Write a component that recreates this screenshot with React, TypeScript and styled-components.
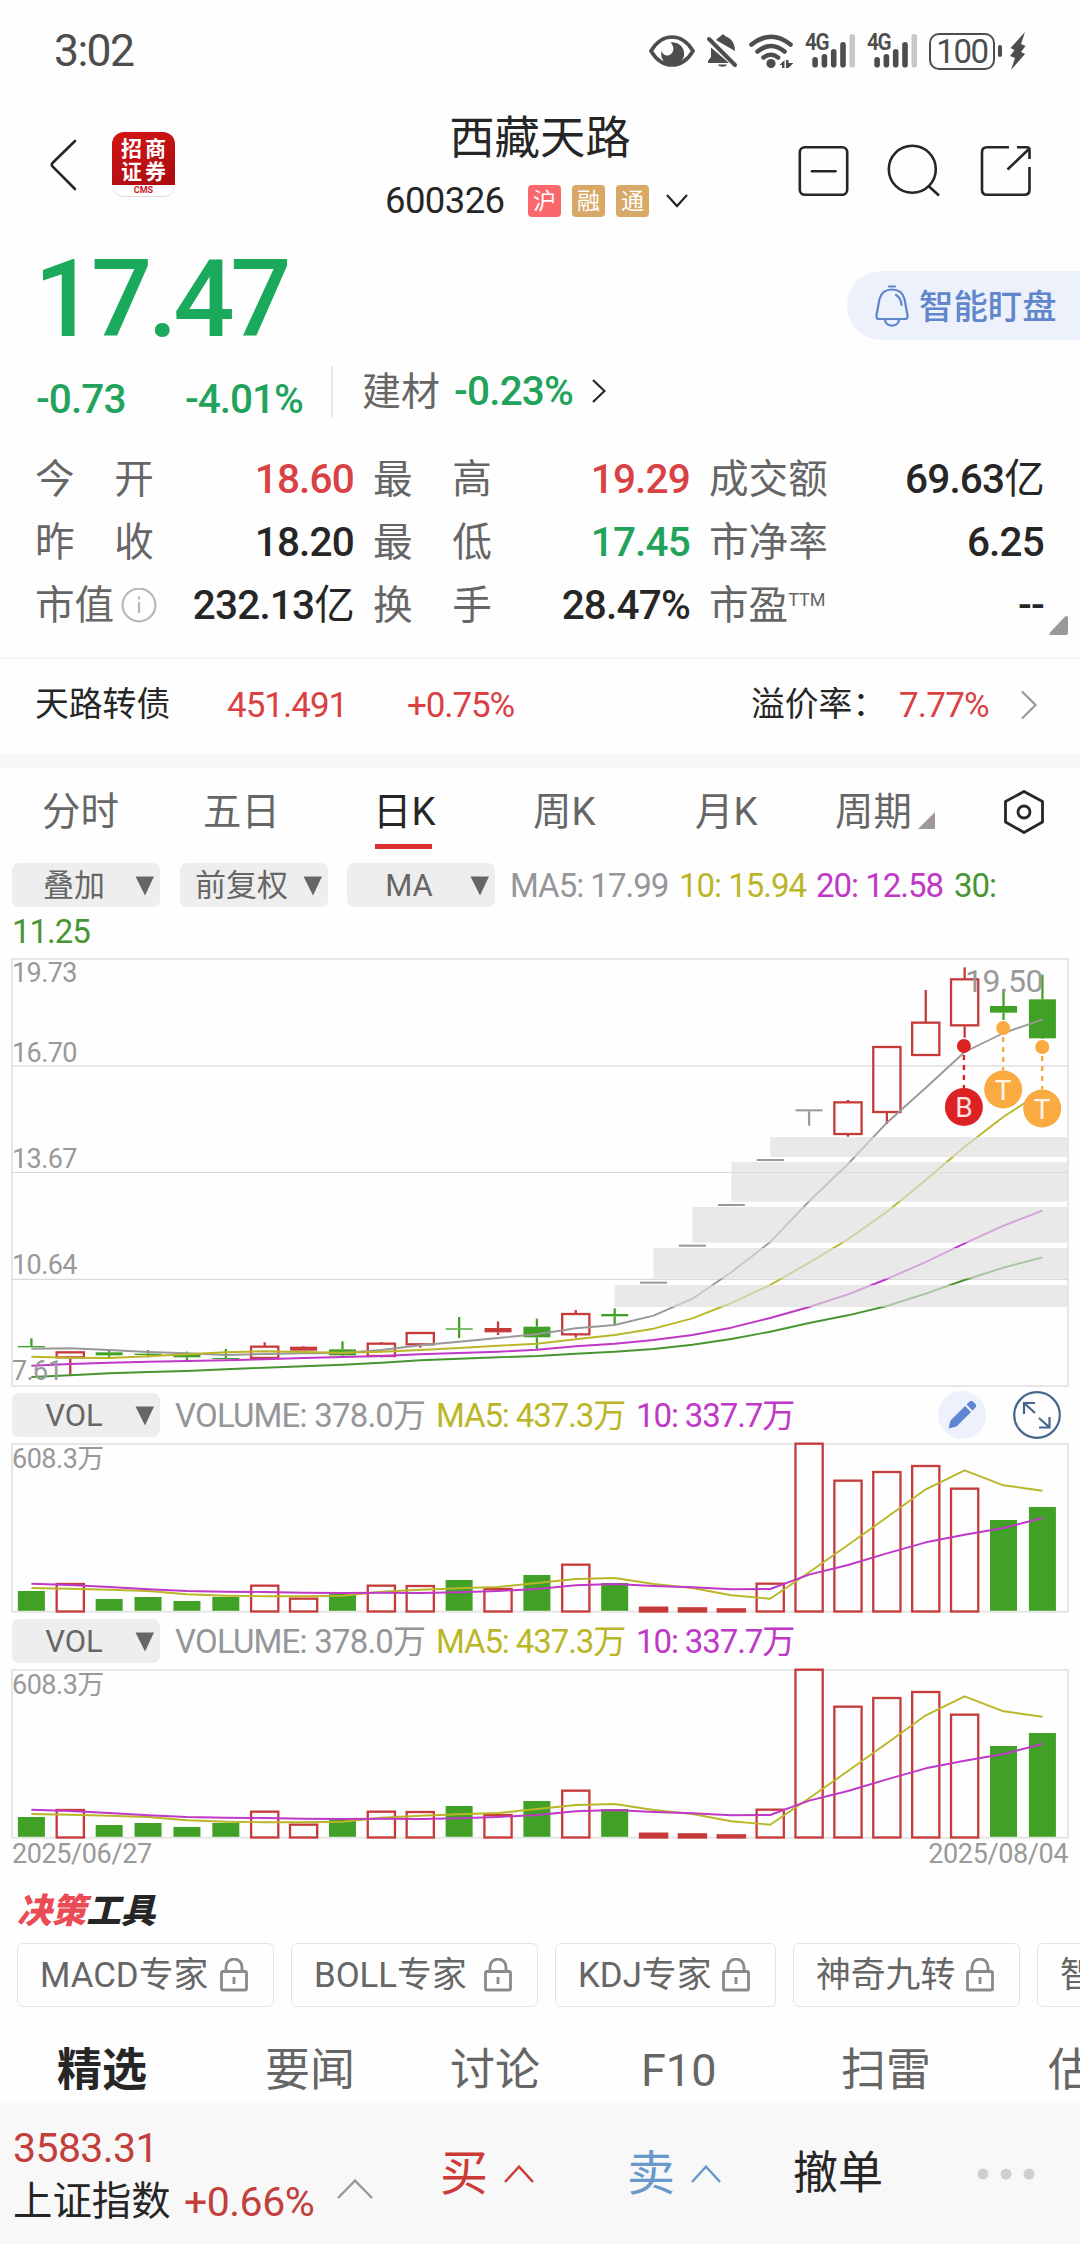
import React from 'react';
import styled, { createGlobalStyle } from 'styled-components';

const FONT = "Roboto, 'Noto Sans CJK SC', sans-serif";

const C = {
  ink: '#262626',
  label: '#666666',
  green: '#22a35c',
  red: '#d94145',
  mute: '#999999',
  candleRed: '#c63a3a',
  candleGreen: '#40a126',
  maGray: '#999999',
  maYellow: '#bab628',
  maMagenta: '#bf38c6',
  maGreen: '#479632',
};

const Global = createGlobalStyle`
  * { box-sizing: border-box; }
  body { margin: 0; background: #fefefe; font-family: ${FONT}; }
  svg { display: block; flex: none; }
`;

const Page = styled.main`
  display: flex;
  flex-direction: column;
  width: 1080px;
  height: 2244px;
  overflow: hidden;
  background: #fefefe;
  color: ${C.ink};
`;

const Text = styled.span<{ $size: number; $ls?: number; $color?: string; $weight?: number }>`
  font-size: ${(p) => p.$size}px;
  letter-spacing: ${(p) => p.$ls ?? 0}px;
  color: ${(p) => p.$color ?? 'inherit'};
  font-weight: ${(p) => p.$weight ?? 400};
  line-height: 1;
  white-space: pre;
`;

/* ---------- status bar ---------- */

const StatusBar = styled.header`
  display: flex;
  align-items: center;
  justify-content: space-between;
  height: 102px;
  padding: 0 55px 0 54px;
  color: #4d4d4d;
`;

const StatusIcons = styled.div`
  display: flex;
  align-items: center;
  gap: 12px;
`;

const BatteryGroup = styled.div`
  display: flex;
  align-items: center;
  gap: 3px;
  margin-right: -4px;
`;

const BatteryBody = styled.div`
  display: flex;
  align-items: center;
  justify-content: center;
  width: 66px;
  height: 37px;
  border: 2.5px solid #4d4d4d;
  border-radius: 10px;
`;

const BatteryTip = styled.div`
  width: 4px;
  height: 12px;
  border-radius: 2px;
  background: #4d4d4d;
`;

const SignalBox = styled.div`
  position: relative;
  width: 50px;
  height: 34px;
`;

const SignalLabel = styled.span`
  position: absolute;
  left: 0;
  top: -1px;
  font-size: 23px;
  line-height: 20px;
  font-weight: 600;
  letter-spacing: -1.5px;
  transform: scaleX(0.9);
  transform-origin: left;
`;

const Signal = () => (
  <SignalBox>
    <svg width="50" height="34" viewBox="803 34 50 34">
      {[57, 54, 49, 42, 34].map((top, i) => (
        <rect key={top} x={810.3 + i * 9.3} y={top} width="5.6" height={67.5 - top} rx="2.8" fill={i === 4 ? '#c8c8c8' : '#4d4d4d'} />
      ))}
    </svg>
    <SignalLabel>4G</SignalLabel>
  </SignalBox>
);

/* ---------- title bar ---------- */

const TitleBar = styled.nav`
  display: grid;
  grid-template-columns: 380px 320px 380px;
  height: 138px;
`;

const TitleLeft = styled.div`
  display: flex;
  align-items: center;
  gap: 35px;
  padding: 0 0 13px 49px;
`;

const TitleRight = styled.div`
  display: flex;
  align-items: center;
  gap: 38px;
  padding-left: 97px;
`;

const Logo = styled.div`
  display: flex;
  flex-direction: column;
  align-items: center;
  width: 63px;
  height: 65px;
  border-radius: 12px;
  overflow: hidden;
  border-bottom: 1px solid #ddd;
  background: #fff;
`;

const LogoTop = styled.div`
  width: 100%;
  height: 53px;
  padding: 4px 0 0 3px;
  background: linear-gradient(160deg, #d41515, #a80c10);
  color: #fff;
  font-family: 'Noto Sans CJK SC', sans-serif;
  font-size: 21px;
  letter-spacing: 3px;
  font-weight: 700;
  line-height: 23px;
  text-align: center;
`;

const LogoBottom = styled.div`
  color: #c8161d;
  font-size: 9px;
  font-weight: 700;
  line-height: 10px;
`;

const TitleCenter = styled.div`
  display: flex;
  flex-direction: column;
`;

const StockName = styled.h1`
  margin: 0;
  height: 70px;
  font-size: 45.4px;
  line-height: 74px;
  font-weight: 400;
  text-align: center;
`;

const CodeRow = styled.div`
  display: flex;
  align-items: center;
  height: 58px;
  gap: 11px;
  padding-left: 5px;
`;

const CodeText = styled.span`
  width: 132px;
  font-size: 36.5px;
  letter-spacing: -0.6px;
  line-height: 58px;
`;

const Tag = styled.span<{ $bg: string }>`
  width: 33px;
  height: 32px;
  border-radius: 4px;
  background: ${(p) => p.$bg};
  color: #fff;
  font-size: 23px;
  line-height: 33px;
  text-align: center;
`;

const ChevronSlot = styled.span`
  padding-left: 6px;
`;

/* ---------- quote ---------- */

const PriceRow = styled.div`
  display: flex;
  justify-content: space-between;
  height: 116px;
  padding-left: 34px;
`;

const Price = styled.div`
  color: #1ba95c;
  font-size: 108px;
  font-weight: 500;
  line-height: 119px;
  letter-spacing: -4.5px;
`;

const WatchPill = styled.div`
  display: flex;
  align-items: center;
  gap: 8px;
  width: 233px;
  height: 69px;
  margin-top: 31px;
  padding-left: 28px;
  border-radius: 35px 0 0 35px;
  background: #ecf1fb;
`;

const PillText = styled.span`
  padding-top: 3px;
  color: #6185cb;
  font-size: 34.4px;
  font-weight: 500;
  line-height: 1;
`;

const ChangeRow = styled.div`
  display: grid;
  grid-template-columns: 149px 146px 31px 92px 138px 1fr;
  align-items: center;
  height: 70px;
  padding-left: 36px;
`;

const Lowered = styled.div`
  padding-top: 16px;
  line-height: 1;
`;

const SectorName = styled.div`
  padding-top: 3px;
  color: ${C.label};
  font-size: 39px;
  line-height: 1;
`;

const ThinDivider = styled.div`
  width: 1.5px;
  height: 51px;
  background: #e6e6e6;
`;

const StatGrid = styled.div`
  position: relative;
  display: grid;
  grid-template-columns: 319px 317px 335px;
  column-gap: 19px;
  grid-auto-rows: 63px;
  height: 210px;
  margin-top: 21px;
  padding: 1px 36px 0 35px;
`;

const Stat = styled.div`
  display: flex;
  align-items: center;
  justify-content: space-between;
`;

const StatLabel = styled.span`
  display: flex;
  align-items: center;
  color: ${C.label};
  font-size: 39.6px;
  line-height: 63px;
  white-space: pre;
`;

const Unit = styled.span`
  font-weight: 400;
`;

const StatSup = styled.sup`
  font-size: 18px;
  line-height: 20px;
  padding-bottom: 11px;
`;

const ExpandCorner = styled.svg`
  position: absolute;
  right: 12px;
  top: 168px;
`;

const BondRow = styled.div`
  display: grid;
  grid-template-columns: 192px 180px 344px 148px 121px 1fr;
  align-items: center;
  height: 97px;
  padding: 0 0 3px 35px;
  border-top: 2px solid #f5f5f5;
`;

const Band = styled.div`
  height: 14px;
  background: #f7f7f7;
`;

/* ---------- period tabs ---------- */

const PeriodTabs = styled.div`
  display: grid;
  grid-template-columns: 161px 170px 160px 162px 140px 168px 1fr;
  align-items: center;
  height: 95px;
  padding: 0 0 7px 42px;
`;

const PeriodTab = styled.div<{ $active?: boolean }>`
  position: relative;
  display: flex;
  align-items: center;
  gap: 6px;
  height: 88px;
  font-size: 38.4px;
  line-height: 90px;
  color: ${(p) => (p.$active ? C.ink : C.label)};
  &::after {
    content: '';
    display: ${(p) => (p.$active ? 'block' : 'none')};
    position: absolute;
    left: 2px;
    bottom: 7.5px;
    width: 57px;
    height: 4.5px;
    background: #dc2f2f;
  }
`;

/* ---------- indicator bars ---------- */

const Legend = styled.div<{ $h: number }>`
  display: flex;
  align-items: center;
  height: ${(p) => p.$h}px;
  padding-left: 12px;
`;

const Dropdown = styled.button<{ $gap?: number }>`
  display: grid;
  grid-template-columns: 123px 25px;
  align-items: center;
  width: 148px;
  height: 44px;
  margin: 0 ${(p) => p.$gap ?? 19.5}px 0 0;
  padding: 0;
  border: 0;
  border-radius: 7px;
  background: #eeeeee;
  color: ${C.label};
  font-family: inherit;
  font-size: 31px;
  line-height: 44px;
  white-space: nowrap;
`;

const DropLabel = styled.span`
  padding: 2px 0 0 1px;
  line-height: 42px;
  text-align: center;
`;

const DropCaret = styled.span`
  padding-top: 2px;
`;

const LegendItem = styled.span<{ $color: string; $w: number; $ls?: number }>`
  width: ${(p) => p.$w}px;
  padding-top: 2px;
  color: ${(p) => p.$color};
  font-size: 33px;
  line-height: 44px;
  letter-spacing: ${(p) => p.$ls ?? -1}px;
  white-space: nowrap;
`;

const LegendWrap = styled.div`
  height: 48px;
  padding-left: 12px;
  color: ${C.maGreen};
  font-size: 33px;
  line-height: 49px;
  letter-spacing: -1px;
`;

const LegendTools = styled.div`
  display: flex;
  gap: 27px;
  margin-left: auto;
  padding-right: 19px;
`;

const DateRow = styled.div`
  display: flex;
  justify-content: space-between;
  height: 26px;
  padding: 0 12px;
  color: ${C.mute};
  font-size: 27px;
  line-height: 28px;
  letter-spacing: -0.4px;
`;

/* ---------- tools and tabs ---------- */

const ToolsTitle = styled.h2`
  margin: 0;
  height: 77px;
  padding: 8px 0 0 17px;
  font-size: 34.6px;
  line-height: 68px;
  font-weight: 900;
  font-family: 'Noto Sans CJK SC', sans-serif;
  font-style: italic;
  em { color: #ea4b55; }
`;

const ChipRow = styled.div`
  display: flex;
  gap: 17px;
  height: 64px;
  padding-left: 17px;
`;

const Chip = styled.div<{ $w: number }>`
  display: flex;
  flex: none;
  align-items: center;
  justify-content: space-between;
  width: ${(p) => p.$w}px;
  height: 64px;
  padding: 0 25px 0 22px;
  border: 1.5px solid #e4e4e4;
  border-radius: 6px;
  color: ${C.label};
  font-size: 34.8px;
  line-height: 62px;
  white-space: nowrap;
`;

const InfoTabs = styled.div`
  display: grid;
  grid-template-columns: 208px 185px 191px 200px 207px 60px;
  height: 96px;
  padding: 32px 0 0 57px;
`;

const InfoTab = styled.div<{ $active?: boolean }>`
  font-size: 45px;
  line-height: 64px;
  font-weight: ${(p) => (p.$active ? 700 : 400)};
  color: ${(p) => (p.$active ? C.ink : C.label)};
  white-space: nowrap;
`;

/* ---------- footer ---------- */

const Footer = styled.footer`
  display: grid;
  grid-template-columns: 440px 187px 166px 287px;
  height: 141px;
  background: #f8f8f8;
`;

const IndexCell = styled.div`
  display: grid;
  grid-template-columns: 171px 153px 1fr;
  grid-template-rows: 54px 54px;
  padding: 17px 0 0 13px;
  line-height: 54px;
`;

const IndexText = styled.span<{ $color: string; $size: number; $ls: number }>`
  color: ${(p) => p.$color};
  font-size: ${(p) => p.$size}px;
  letter-spacing: ${(p) => p.$ls}px;
  line-height: 56px;
  white-space: nowrap;
`;

const IndexArrow = styled.div`
  grid-column: 3;
  grid-row: 2;
  padding-top: 5px;
`;

const TradeCell = styled.div<{ $color: string; $size: number; $gap?: number }>`
  display: flex;
  align-items: center;
  gap: ${(p) => p.$gap ?? 16}px;
  height: 141px;
  color: ${(p) => p.$color};
  font-size: ${(p) => p.$size}px;
  line-height: 143px;
`;

/* ---------- icons ---------- */

const Caret = () => (
  <DropCaret>
    <svg width="20" height="20" viewBox="0 0 20 20"><path d="M0.5 0.5H19L10 19.5Z" fill="#666" /></svg>
  </DropCaret>
);

const Lock = () => (
  <svg width="28" height="34" viewBox="0 0 28 34" fill="none" stroke="#8a8a8a" strokeWidth="2.8">
    <rect x="1.5" y="13.5" width="25" height="18.5" rx="1.5" />
    <path d="M6 13V9a8 8 0 0 1 16 0v4M14 19v7" />
  </svg>
);

const UpArrow = ({ color, w, h }: { color: string; w: number; h: number }) => (
  <svg width={w} height={h} viewBox={`0 0 ${w} ${h}`} fill="none" stroke={color} strokeWidth="2.4">
    <path d={`M1 ${h - 1}L${w / 2} 1.6L${w - 1} ${h - 1}`} />
  </svg>
);

/* ---------- charts ---------- */

const X0 = 31.4;
const STEP = 38.885;
const cx = (i: number) => X0 + STEP * i;

type Candle = { k: 'r' | 'R' | 'g' | 'n'; o: number; c: number; h: number; l: number };

const K = (k: Candle['k'], o: number, c: number, h: number, l: number): Candle => ({ k, o, c, h, l });

// Kinds: r = hollow rise, R = solid rise, g = fall, n = unchanged. Values in thirds of a pixel.
const candles: Candle[] = [
  K('g', 1218, 1222, 1195, 1220), K('r', 1237, 1252, 1237, 1305), K('g', 1237, 1246, 1233, 1252),
  K('g', 1241, 1245, 1230, 1252), K('g', 1242, 1252, 1235, 1260), K('g', 1254, 1257, 1227, 1257),
  K('r', 1220, 1254, 1207, 1254), K('R', 1220, 1232, 1218, 1232), K('g', 1228, 1246, 1204, 1254),
  K('r', 1211, 1248, 1206, 1252), K('r', 1179, 1213, 1176, 1223), K('g', 1165, 1169, 1131, 1194),
  K('R', 1164, 1177, 1144, 1185), K('g', 1160, 1192, 1136, 1228), K('r', 1122, 1183, 1110, 1193),
  K('g', 1122, 1129, 1105, 1152), K('n', 1025, 1031, 1028, 1028), K('n', 914, 920, 917, 917),
  K('n', 792, 798, 795, 795), K('n', 657, 663, 660, 660), K('n', 508, 514, 511, 557),
  K('r', 487, 582, 480, 590), K('r', 321, 516, 321, 552), K('r', 248, 345, 150, 345),
  K('r', 118, 256, 82, 293), K('g', 198, 218, 148, 240), K('g', 178, 295, 104, 297),
];

const ma5 = [1226, 1225, 1230, 1236, 1240, 1245, 1242, 1240, 1239, 1230, 1216, 1205, 1194, 1183, 1165, 1155, 1127, 1076, 997, 906, 784, 672, 548, 443, 336, 279, 239];
const ma10 = [1250, 1253, 1254, 1249, 1243, 1237, 1234, 1236, 1238, 1235, 1230, 1224, 1217, 1211, 1198, 1185, 1166, 1135, 1089, 1035, 968, 898, 815, 720, 620, 530, 455];
const ma20 = [1277, 1272, 1268, 1265, 1263, 1261, 1258, 1254, 1251, 1248, 1243, 1239, 1235, 1229, 1219, 1211, 1200, 1185, 1163, 1134, 1101, 1063, 1017, 966, 910, 857, 812];
const ma30 = [1311, 1306, 1300, 1296, 1293, 1288, 1283, 1279, 1274, 1268, 1261, 1256, 1252, 1248, 1241, 1235, 1227, 1214, 1197, 1175, 1149, 1126, 1098, 1061, 1020, 983, 952];

const gaps = [[15, 1035, 1101], [16, 924, 1016], [17, 801, 908], [18, 666, 785], [19, 591, 651]];

const volumes: [string, number][] = [
  ['g', 633], ['r', 612], ['g', 657], ['g', 651], ['g', 663], ['g', 651], ['r', 617], ['r', 656], ['g', 642],
  ['r', 617], ['r', 618], ['g', 600], ['r', 627], ['g', 585], ['r', 554], ['g', 609], ['R', 683], ['R', 685],
  ['R', 688], ['r', 611], ['r', 191], ['r', 302], ['r', 276], ['r', 258], ['r', 326], ['g', 420], ['g', 381],
];
const vma5 = [624, 626, 629, 633, 643, 647, 649, 649, 647, 635, 629, 625, 621, 609, 597, 594, 612, 624, 646, 656, 577, 495, 412, 328, 271, 316, 332];
const vma10 = [611, 615, 621, 628, 633, 635, 636, 638, 639, 638, 639, 637, 633, 627, 616, 612, 618, 622, 628, 627, 584, 555, 520, 487, 464, 444, 414];

const line = (v: number[], base: number) => v.map((y, i) => `${cx(i).toFixed(1)},${(base + y / 3).toFixed(1)}`).join(' ');

const AxisText = styled.text`
  font-family: ${FONT};
  fill: ${C.mute};
`;

const MarkText = styled.text`
  font-family: ${FONT};
  font-size: 28px;
  fill: #fff;
  fill-opacity: 0.9;
  text-anchor: middle;
`;

const Marker = ({ x, dot, badge, color, label }: { x: number; dot: number; badge: number; color: string; label: string }) => (
  <g>
    <line x1={x} x2={x} y1={dot + 9} y2={badge - 19} stroke={color} strokeWidth="2.4" strokeDasharray="5 5" />
    <circle cx={x} cy={dot} r="7" fill={color} />
    <circle cx={x} cy={badge} r="19" fill={color} />
    <MarkText x={x} y={badge + 10}>{label}</MarkText>
  </g>
);

const PriceChart = () => (
  <svg width="1080" height="435" viewBox="0 955 1080 435">
    <rect x="12" y="959" width="1056" height="427" fill="none" stroke="#e6e6e6" strokeWidth="2" />
    {[1065.8, 1172.5, 1279.3].map((y) => (
      <line key={y} x1="12" x2="1068" y1={y} y2={y} stroke="#d9d9d9" strokeWidth="1.2" />
    ))}
    {candles.map((d, i) => {
      const x = cx(i);
      const color = d.k === 'g' ? C.candleGreen : d.k === 'n' ? C.mute : C.candleRed;
      const [o, c, h, l] = [d.o, d.c, d.h, d.l].map((v) => 940 + v / 3);
      return (
        <g key={i} stroke={color} strokeWidth="2.3">
          {h < o && <line x1={x} x2={x} y1={h} y2={o} />}
          {l > c && <line x1={x} x2={x} y1={c} y2={l} />}
          {d.k === 'r'
            ? <rect x={x - 13.6} y={o} width="27.2" height={c - o} fill="none" />
            : <rect x={x - 13.5} y={o} width="27" height={c - o} fill={color} stroke="none" />}
        </g>
      );
    })}
    <g fill="none" strokeWidth="1.9" strokeLinejoin="round">
      <polyline points={line(ma5, 940)} stroke={C.maGray} />
      <polyline points={line(ma10, 940)} stroke={C.maYellow} />
      <polyline points={line(ma20, 940)} stroke={C.maMagenta} />
      <polyline points={line(ma30, 940)} stroke={C.maGreen} />
    </g>
    {gaps.map(([i, a, b]) => (
      <rect key={i} x={cx(i)} y={940 + a / 3} width={1067 - cx(i)} height={(b - a) / 3} fill="rgba(222,222,222,0.66)" />
    ))}
    {([['19.73', 972.5], ['16.70', 1052.5], ['13.67', 1158.5], ['10.64', 1264.5], ['7.61', 1370.5]] as [string, number][]).map(([t, y]) => (
      <AxisText key={t} x="12" y={y + 9.6} fontSize="27" letterSpacing="-0.6">{t}</AxisText>
    ))}
    <AxisText x="965" y="991.5" fontSize="32" letterSpacing="-0.5">19.50</AxisText>
    <Marker x={963.9} dot={1046} badge={1107} color="#dd2224" label="B" />
    <Marker x={1003.2} dot={1028} badge={1089.5} color="#f9ab42" label="T" />
    <Marker x={1042.2} dot={1047} badge={1108.5} color="#f9ab42" label="T" />
  </svg>
);

const VolumeChart = ({ height }: { height: number }) => (
  <svg width="1080" height={height} viewBox={`0 1440 1080 ${height}`}>
    <rect x="12" y="1444" width="1056" height="167.7" fill="none" stroke="#e6e6e6" strokeWidth="2" />
    {volumes.map(([k, t], i) => {
      const y = 1380 + t / 3;
      if (k === 'g') return <rect key={i} x={cx(i) - 13.5} y={y} width="27" height={1610.8 - y} fill={C.candleGreen} />;
      return (
        <rect
          key={i}
          x={cx(i) - 13.6}
          y={y}
          width="27.2"
          height={1611.5 - y}
          fill={k === 'R' ? C.candleRed : 'none'}
          stroke={C.candleRed}
          strokeWidth="2.300"
        />
      );
    })}
    <g fill="none" strokeWidth="1.9" strokeLinejoin="round">
      <polyline points={line(vma5, 1380)} stroke={C.maYellow} />
      <polyline points={line(vma10, 1380)} stroke={C.maMagenta} />
    </g>
    <AxisText x="12" y="1467.5" fontSize="27" letterSpacing="-0.5">608.3万</AxisText>
  </svg>
);

const VolumeLegend = ({ children }: { children?: React.ReactNode }) => (
  <Legend $h={50}>
    <Dropdown $gap={15}><DropLabel>VOL</DropLabel><Caret /></Dropdown>
    <LegendItem $w={261} $ls={-0.8} $color="#95969a">VOLUME: 378.0万</LegendItem>
    <LegendItem $w={200} $ls={-1.1} $color={C.maYellow}>MA5: 437.3万</LegendItem>
    <LegendItem $w={160} $ls={-1.1} $color={C.maMagenta}>10: 337.7万</LegendItem>
    {children}
  </Legend>
);

const stats: { label: React.ReactNode; value: React.ReactNode; color?: string }[] = [
  { label: '今　开', value: '18.60', color: C.red },
  { label: '最　高', value: '19.29', color: C.red },
  { label: '成交额', value: <>69.63<Unit>亿</Unit></> },
  { label: '昨　收', value: '18.20' },
  { label: '最　低', value: '17.45', color: C.green },
  { label: '市净率', value: '6.25' },
  {
    label: (
      <>
        市值
        <svg width="44" height="36" viewBox="0 0 44 36" fill="none" stroke="#b8b8b8" strokeWidth="2.2">
          <circle cx="25" cy="17" r="16.4" />
          <path d="M25 14v11M25 8.5v3" />
        </svg>
      </>
    ),
    value: <>232.13<Unit>亿</Unit></>,
  },
  { label: '换　手', value: '28.47%' },
  { label: <>市盈<StatSup>TTM</StatSup></>, value: '--' },
];

export default function App() {
  return (
    <Page>
      <Global />
      <StatusBar>
        <Text $size={44.5} $ls={-1.6}>3:02</Text>
        <StatusIcons>
          <svg width="46" height="34" viewBox="647 34 46 34">
            <path d="M649 51C655 41 662 37 670 37s15 4 21 14c-6 10-13 14-21 14s-15-4-21-14Z" fill="none" stroke="#4d4d4d" strokeWidth="3.6" />
            <path d="M668.500 42.500a11.500 11.500 0 1 1-9 8.500c1.500 4 5 5.500 8 4 4.500-2 5.500-8 1-12.500Z" fill="#4d4d4d" />
          </svg>
          <svg width="30" height="36" viewBox="705 33 30 36">
            <path d="M709 47.500L727 63H706v-2l3-4ZM714 40c2-2 3-3 5-4 1-2 3-2 4 0 6 2 10 7 10 15ZM716 64.500h9c-1 3-8 3-9 0Z" fill="#4d4d4d" />
            <path d="M707 39L733 65" stroke="#4d4d4d" strokeWidth="4" strokeLinecap="round" />
          </svg>
          <svg width="44" height="34" viewBox="747 33 44 34">
            <g fill="none" stroke="#4d4d4d" strokeWidth="4.600" strokeLinecap="round">
              <path d="M749.500 43.500Q769 28 788.500 43.500M755.500 50.500Q769 39.500 782.500 50.500M761.500 56.500Q769 51 776 56.500" />
            </g>
            <circle cx="769" cy="62.500" r="4.600" fill="#4d4d4d" />
            <path d="M777.500 64l5-5v8h-2.500v-3ZM784 59h2.500v3h5l-5 5H784Z" fill="#4d4d4d" />
          </svg>
          <Signal />
          <Signal />
          <BatteryGroup>
            <BatteryBody><Text $size={33} $ls={-1.4}>100</Text></BatteryBody>
            <BatteryTip />
            <svg width="24" height="38" viewBox="1003 32 24 38">
              <path d="M1023 32l-14.500 16 4 2-4.500 6 5 2-4 12 14-16-4-2 4.500-6-4.500-2Z" fill="#4d4d4d" />
            </svg>
          </BatteryGroup>
        </StatusIcons>
      </StatusBar>

      <TitleBar>
        <TitleLeft>
          <svg width="28" height="52" viewBox="49 138.500 28 52" fill="none" stroke="#262626" strokeWidth="2.6" strokeLinecap="round">
            <path d="M75 140.500L52.500 162.500q-1.500 1.700 0 3.400L75 188.500" />
          </svg>
          <Logo>
            <LogoTop>招商<br />证券</LogoTop>
            <LogoBottom>CMS</LogoBottom>
          </Logo>
        </TitleLeft>
        <TitleCenter>
          <StockName>西藏天路</StockName>
          <CodeRow>
            <CodeText>600326</CodeText>
            <Tag $bg="#fb686c">沪</Tag>
            <Tag $bg="#d8a866">融</Tag>
            <Tag $bg="#d8a866">通</Tag>
            <ChevronSlot>
              <svg width="22" height="14" viewBox="0 0 22 14" fill="none" stroke="#262626" strokeWidth="2.200">
                <path d="M1 1L11 12L21 1" />
              </svg>
            </ChevronSlot>
          </CodeRow>
        </TitleCenter>
        <TitleRight>
          <svg width="52" height="52" viewBox="797 145 52 52" fill="none" stroke="#262626" strokeWidth="2.600">
            <rect x="799.800" y="147.300" width="47.400" height="47.400" rx="5" />
            <path d="M812 171.300h23.500" strokeLinecap="round" />
          </svg>
          <svg width="54" height="54" viewBox="887 144 54 54" fill="none" stroke="#262626" strokeWidth="2.600">
            <circle cx="912.300" cy="169.300" r="23.500" />
            <path d="M928.500 186L939 195.500" />
          </svg>
          <svg width="54" height="52" viewBox="979 145 54 52" fill="none" stroke="#262626" strokeWidth="2.600">
            <path d="M1009 147.300H987q-5 0-5 5v37.400q0 5 5 5h37.500q5 0 5-5V167M1017 147.300h10q2.500 0 2.500 2.500V159M1007.500 169.500L1029 149" />
          </svg>
        </TitleRight>
      </TitleBar>

      <PriceRow>
        <Price>17.47</Price>
        <WatchPill>
          <svg width="36" height="44" viewBox="875 284 36 44" fill="none" stroke="#6185cb" strokeWidth="2.200" strokeLinecap="round">
            <path d="M889 286.500h6M878 319q-2-1-1.500-4l3-16q2.500-9.500 12.500-9.500t12.500 9.500l3 16q.5 3-1.500 4ZM885 320c1 7.500 13 7.500 14 0M896 295q5 3 5.500 10" />
          </svg>
          <PillText>智能盯盘</PillText>
        </WatchPill>
      </PriceRow>

      <ChangeRow>
        <Lowered><Text $size={40.500} $ls={-0.900} $color={C.green} $weight={500}>-0.73</Text></Lowered>
        <Lowered><Text $size={40.500} $ls={-1} $color={C.green} $weight={500}>-4.01%</Text></Lowered>
        <ThinDivider />
        <SectorName>建材</SectorName>
        <Text $size={40.500} $ls={-0.800} $color={C.green} $weight={500}>-0.23%</Text>
        <svg width="14" height="24" viewBox="0 0 14 24" fill="none" stroke="#262626" strokeWidth="2.200">
          <path d="M1 1L12.500 12L1 23" />
        </svg>
      </ChangeRow>

      <StatGrid>
        {stats.map((s, i) => (
          <Stat key={i}>
            <StatLabel>{s.label}</StatLabel>
            <Text $size={40.500} $ls={-0.800} $weight={500} $color={s.color ?? C.ink}>{s.value}</Text>
          </Stat>
        ))}
        <ExpandCorner width="20" height="20" viewBox="0 0 20 20">
          <path d="M17 1.500Q20 0 20 3V18q0 2-2 2H3q-3 0-1-2.500Z" fill="#999" />
        </ExpandCorner>
      </StatGrid>

      <BondRow>
        <Text $size={33.800}>天路转债</Text>
        <Text $size={35} $ls={-1} $color={C.red}>451.491</Text>
        <Text $size={35} $ls={-1.100} $color={C.red}>+0.75%</Text>
        <Text $size={33.800}>溢价率：</Text>
        <Text $size={35} $ls={-0.800} $color={C.red}>7.77%</Text>
        <svg width="18" height="30" viewBox="0 0 18 30" fill="none" stroke="#999" strokeWidth="2.200">
          <path d="M2 1.500L15.500 15L2 28.500" />
        </svg>
      </BondRow>
      <Band />

      <PeriodTabs>
        <PeriodTab>分时</PeriodTab>
        <PeriodTab>五日</PeriodTab>
        <PeriodTab $active>日K</PeriodTab>
        <PeriodTab>周K</PeriodTab>
        <PeriodTab>月K</PeriodTab>
        <PeriodTab>
          周期
          <svg width="17" height="33" viewBox="0 0 17 33"><path d="M17 16V33H0Z" fill="#a09898" /></svg>
        </PeriodTab>
        <svg width="42" height="46" viewBox="0 0 42 46" fill="none" stroke="#262626" strokeWidth="2.800" strokeLinejoin="round">
          <path d="M21 2.500L39.500 12.500V33L21 43.500L2.500 33V12.500Z" />
          <circle cx="21" cy="23" r="6" />
        </svg>
      </PeriodTabs>

      <Legend $h={44}>
        <Dropdown><DropLabel>叠加</DropLabel><Caret /></Dropdown>
        <Dropdown><DropLabel>前复权</DropLabel><Caret /></Dropdown>
        <Dropdown $gap={15}><DropLabel>MA</DropLabel><Caret /></Dropdown>
        <LegendItem $w={169} $color="#95969a">MA5: 17.99</LegendItem>
        <LegendItem $w={137} $color={C.maYellow}>10: 15.94</LegendItem>
        <LegendItem $w={138} $color={C.maMagenta}>20: 12.58</LegendItem>
        <LegendItem $w={60} $color={C.maGreen}>30:</LegendItem>
      </Legend>
      <LegendWrap>11.25</LegendWrap>
      <PriceChart />

      <VolumeLegend>
        <LegendTools>
          <svg width="48" height="48" viewBox="0 0 48 48">
            <circle cx="24" cy="24" r="24" fill="#ecf1fb" />
            <path d="M10.500 37.500l2-8L27 15l6 6-14.500 14.500ZM28.500 13.500l3-3q2-1.500 4 .5l2 2q1.500 2 0 3.500l-3 3Z" fill="#5f85d3" />
          </svg>
          <svg width="48" height="48" viewBox="0 0 48 48" fill="none" stroke="#46678c" strokeWidth="2.200">
            <circle cx="24" cy="24" r="22.800" />
            <path d="M22 22L11 12M22 12H11V23M26 27L36 36M26 36.500H36.500V26" />
          </svg>
        </LegendTools>
      </VolumeLegend>
      <VolumeChart height={176} />
      <VolumeLegend />
      <VolumeChart height={174} />
      <DateRow><span>2025/06/27</span><span>2025/08/04</span></DateRow>

      <ToolsTitle><em>决策</em>工具</ToolsTitle>
      <ChipRow>
        <Chip $w={257}>MACD专家<Lock /></Chip>
        <Chip $w={247}>BOLL专家<Lock /></Chip>
        <Chip $w={221}>KDJ专家<Lock /></Chip>
        <Chip $w={227}>神奇九转<Lock /></Chip>
        <Chip $w={227}>智</Chip>
      </ChipRow>

      <InfoTabs>
        <InfoTab $active>精选</InfoTab>
        <InfoTab>要闻</InfoTab>
        <InfoTab>讨论</InfoTab>
        <InfoTab>F10</InfoTab>
        <InfoTab>扫雷</InfoTab>
        <InfoTab>估</InfoTab>
      </InfoTabs>

      <Footer>
        <IndexCell>
          <IndexText $color="#c2403c" $size={41} $ls={-0.600}>3583.31</IndexText>
          <span />
          <span />
          <IndexText $color={C.ink} $size={39.400} $ls={0}>上证指数</IndexText>
          <IndexText $color="#c2403c" $size={41} $ls={-0.500}>+0.66%</IndexText>
          <IndexArrow><UpArrow color="#999" w={36} h={20} /></IndexArrow>
        </IndexCell>
        <TradeCell $color="#cb3a36" $size={48}>买<UpArrow color="#cb3a36" w={30} h={18} /></TradeCell>
        <TradeCell $color="#6898cc" $size={48}>卖<UpArrow color="#6898cc" w={30} h={18} /></TradeCell>
        <TradeCell $color={C.ink} $size={45} $gap={94}>
          撤单
          <svg width="60" height="12" viewBox="0 0 60 12" fill="#cfcfcf">
            <circle cx="6" cy="6" r="5.500" /><circle cx="29" cy="6" r="5.500" /><circle cx="52" cy="6" r="5.500" />
          </svg>
        </TradeCell>
      </Footer>
    </Page>
  );
}
